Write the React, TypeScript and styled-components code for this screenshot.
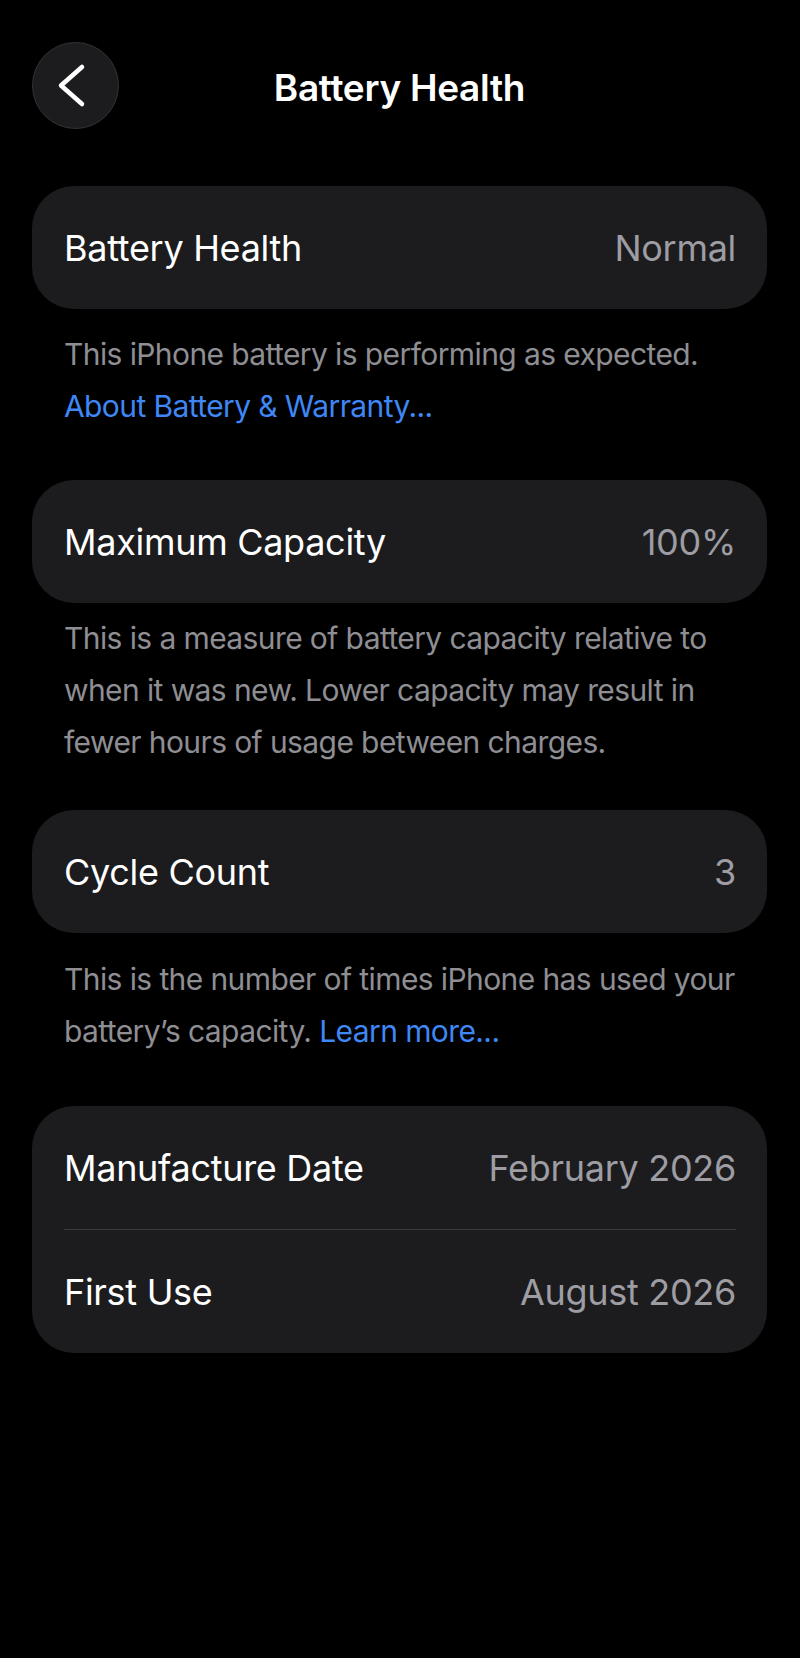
import React from 'react'
import styled, { createGlobalStyle } from 'styled-components'

const GlobalStyle = createGlobalStyle`
  html, body {
    margin: 0;
    padding: 0;
    background: #000;
  }
  body {
    font-family: Inter, "Noto Sans", "Liberation Sans", sans-serif;
    -webkit-font-smoothing: antialiased;
  }
`

type Item = { label: string; value: string }

const App: React.FC = () => {
  return (
    <>
      <GlobalStyle />
      <Page>
        <Header>
          <BackButton aria-label="Back">
            <svg width="87" height="87" viewBox="0 0 87 87">
              <polyline
                points="50,25 29,43.5 50,62"
                fill="none"
                stroke="#fff"
                strokeWidth="4.5"
                strokeLinecap="round"
                strokeLinejoin="round"
              />
            </svg>
          </BackButton>
          <Title>Battery Health</Title>
          <span />
        </Header>

        <Card $top={57}>
          <Row>
            <Label>Battery Health</Label>
            <Value>Normal</Value>
          </Row>
        </Card>
        <Caption $top={19}>
          This iPhone battery is performing as expected.
          <br />
          <Link>About Battery &amp; Warranty...</Link>
        </Caption>

        <Card $top={48}>
          <Row>
            <Label>Maximum Capacity</Label>
            <Value>100%</Value>
          </Row>
        </Card>
        <Caption $top={9}>
          This is a measure of battery capacity relative to when it was new. Lower capacity may
          result in fewer hours of usage between charges.
        </Caption>

        <Card $top={42}>
          <Row>
            <Label>Cycle Count</Label>
            <Value>3</Value>
          </Row>
        </Card>
        <Caption $top={20}>
          This is the number of times iPhone has used your battery’s capacity.{' '}
          <Link>Learn more...</Link>
        </Caption>

        <Card $top={49}>
          {dates.map((d, i) => (
            <React.Fragment key={d.label}>
              {i > 0 && <Divider />}
              <Row>
                <Label>{d.label}</Label>
                <Value>{d.value}</Value>
              </Row>
            </React.Fragment>
          ))}
        </Card>
      </Page>
    </>
  )
}

const dates: Item[] = [
  { label: 'Manufacture Date', value: 'February 2026' },
  { label: 'First Use', value: 'August 2026' },
]

const Page = styled.div`
  min-height: 1658px;
  box-sizing: border-box;
  padding: 42px 33px 0 32px;
  background: #000;
`

const Header = styled.header`
  display: grid;
  grid-template-columns: 87px 1fr 87px;
  align-items: center;
  height: 87px;
`

const BackButton = styled.button`
  width: 87px;
  height: 87px;
  padding: 0;
  border-radius: 50%;
  border: 1.5px solid #333336;
  background: #1c1c1e;
  display: flex;
  align-items: center;
  justify-content: center;
  box-sizing: border-box;
  svg {
    flex: none;
  }
`

const Title = styled.h1`
  margin: 0;
  padding-top: 4px;
  text-align: center;
  color: #fff;
  font-size: 37px;
  font-weight: 600;
  letter-spacing: -0.3px;
`

const Card = styled.section<{ $top: number }>`
  margin-top: ${(p) => p.$top}px;
  background: #1c1c1e;
  border-radius: 42px;
  overflow: hidden;
`

const Row = styled.div`
  height: 123px;
  display: flex;
  align-items: center;
  justify-content: space-between;
  padding: 0 31px 0 32px;
  font-size: 36px;
  letter-spacing: -0.3px;
`

const Label = styled.span`
  color: #fff;
`

const Value = styled.span`
  color: #9d9da3;
`

const Divider = styled.div`
  height: 1px;
  margin: 0 31px 0 32px;
  background: #3a3a3c;
`

const Caption = styled.p<{ $top: number }>`
  margin: ${(p) => p.$top}px 0 0;
  padding: 0 16px 0 32px;
  color: #8e8e93;
  font-size: 30px;
  line-height: 52px;
  letter-spacing: -0.6px;
`

const Link = styled.a`
  color: #3f87f5;
  cursor: pointer;
`

export default App
